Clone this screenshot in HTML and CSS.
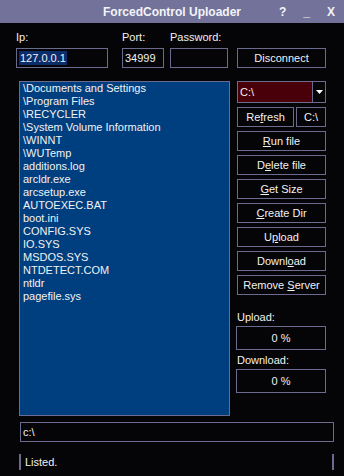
FILE: index.html
```html
<!doctype html>
<html lang="en">
<head>
    <meta charset="UTF-8">
    <title>ForcedControl Uploader</title>
    <link rel="stylesheet" href="styles.css">
</head>
<body>
<div class="window">
    <div class="titlebar">
        <span></span>
        <span class="title">ForcedControl Uploader</span>
        <span class="controls"><span>?</span><span>_</span><span>X</span></span>
    </div>

    <div class="fields">
        <div class="field ip">
            <label>Ip:</label>
            <div class="box"><span class="sel">127.0.0.1</span></div>
        </div>
        <div class="field port">
            <label>Port:</label>
            <div class="box">34999</div>
        </div>
        <div class="field pass">
            <label>Password:</label>
            <div class="box"></div>
        </div>
        <div class="btn disconnect">Disconnect</div>
    </div>

    <div class="main">
        <ul class="files">
            <li>\Documents and Settings</li>
            <li>\Program Files</li>
            <li>\RECYCLER</li>
            <li>\System Volume Information</li>
            <li>\WINNT</li>
            <li>\WUTemp</li>
            <li>additions.log</li>
            <li>arcldr.exe</li>
            <li>arcsetup.exe</li>
            <li>AUTOEXEC.BAT</li>
            <li>boot.ini</li>
            <li>CONFIG.SYS</li>
            <li>IO.SYS</li>
            <li>MSDOS.SYS</li>
            <li>NTDETECT.COM</li>
            <li>ntldr</li>
            <li>pagefile.sys</li>
        </ul>

        <div class="side">
            <div class="drive">
                <span class="drive-value">C:\</span>
                <span class="drive-arrow">
                    <svg width="7" height="4" viewBox="0 0 7 4"><polygon points="0,0 7,0 3.5,4" fill="#fff"/></svg>
                </span>
            </div>
            <div class="row">
                <div class="btn refresh">Re<u>f</u>resh</div>
                <div class="btn root">C:\</div>
            </div>
            <div class="btn"><u>R</u>un file</div>
            <div class="btn">D<u>e</u>lete file</div>
            <div class="btn"><u>G</u>et Size</div>
            <div class="btn"><u>C</u>reate Dir</div>
            <div class="btn">U<u>p</u>load</div>
            <div class="btn">Downl<u>o</u>ad</div>
            <div class="btn">Remove <u>S</u>erver</div>

            <div class="progress first">
                <label>Upload:</label>
                <div class="meter">0 %</div>
            </div>
            <div class="progress">
                <label>Download:</label>
                <div class="meter">0 %</div>
            </div>
        </div>
    </div>

    <div class="path">c:\</div>

    <div class="status">
        <span class="status-text">Listed.</span>
    </div>
</div>
</body>
</html>
```

FILE: styles.css
```css
body{
    margin: 0;
    background: #050507;
    font-family: "Liberation Sans", Arial, sans-serif;
    font-size: 11px;
    color: #f2f2f2;
}
.window{
    width: 344px;
    height: 476px;
    overflow: hidden;
}
.titlebar{
    height: 23px;
    background: #72729a;
    display: grid;
    grid-template-columns: 1fr auto 1fr;
    align-items: center;
    font-weight: bold;
    font-size: 12px;
    color: #f4f4f8;
}
.controls{
    display: flex;
    justify-content: flex-end;
    gap: 17px;
    padding-right: 9px;
}
.fields{
    display: flex;
    align-items: flex-end;
    padding: 8px 0 0 16px;
}
.field label{
    display: block;
    line-height: 13px;
    margin-bottom: 4px;
}
.box{
    box-sizing: border-box;
    height: 20px;
    border: 1px solid #6b6b90;
    padding: 0 2px;
    line-height: 18px;
    overflow: hidden;
}
.sel{
    background: #0c2d6c;
    display: inline-block;
    line-height: 14px;
    padding: 0 1px;
}
.ip{ width: 92px; margin-right: 14px; }
.port{ width: 42px; margin-right: 6px; }
.pass{ width: 58px; margin-right: 9px; }
.btn{
    box-sizing: border-box;
    height: 20px;
    border: 1px solid #6b6b90;
    text-align: center;
    line-height: 18px;
}
.disconnect{ width: 89px; }
.main{
    display: flex;
    margin-top: 13px;
    padding-left: 19px;
}
.files{
    box-sizing: border-box;
    width: 211px;
    height: 335px;
    margin: 0;
    padding: 0 3px;
    list-style: none;
    background: #003f7f;
    border: 1px solid #6b6b90;
    line-height: 13px;
}
.side{
    width: 89px;
    margin-left: 7px;
    display: flex;
    flex-direction: column;
    gap: 4px;
}
.drive{
    box-sizing: border-box;
    height: 22px;
    border: 1px solid #6b6b90;
    display: flex;
}
.drive-value{
    flex: 1;
    background: #4a0008;
    border-right: 1px solid #6b6b90;
    padding-left: 2px;
    line-height: 20px;
}
.drive-arrow{
    width: 12px;
    display: flex;
    justify-content: center;
    padding-top: 8px;
}
.drive-arrow svg{
    display: block;
}
.row{
    display: flex;
    gap: 2px;
}
.refresh{ width: 57px; }
.root{ flex: 1; }
.progress label{
    display: block;
    line-height: 13px;
    margin-bottom: 2px;
}
.progress.first{
    margin-top: 12px;
}
.meter{
    box-sizing: border-box;
    width: 90px;
    height: 24px;
    margin-left: -1px;
    border: 1px solid #6b6b90;
    text-align: center;
    line-height: 22px;
}
.path{
    box-sizing: border-box;
    width: 314px;
    height: 20px;
    margin: 6px 0 0 20px;
    border: 1px solid #6b6b90;
    padding-left: 2px;
    line-height: 18px;
}
.status{
    box-sizing: border-box;
    width: 315px;
    height: 16px;
    margin: 12px 0 0 19px;
    border-left: 2px solid #6b6b90;
    border-right: 2px solid #6b6b90;
    padding-left: 4px;
    line-height: 16px;
}
```
